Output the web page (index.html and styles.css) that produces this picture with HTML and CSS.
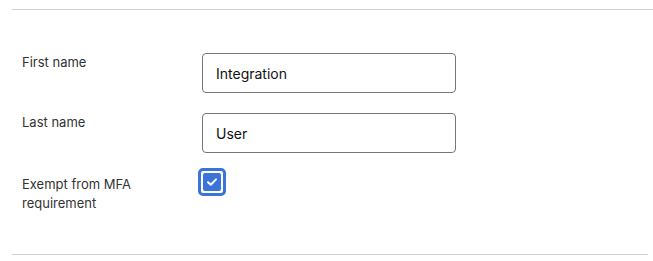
FILE: index.html
```html
<!DOCTYPE html>
<html>
<head>
<meta charset="utf-8">
<link rel="stylesheet" href="styles.css">
</head>
<body>
<div class="panel">
  <form class="form">
    <div class="row">
      <label class="label" for="fn">First name</label>
      <input class="field" id="fn" type="text" value="Integration">
    </div>
    <div class="row">
      <label class="label" for="ln">Last name</label>
      <input class="field" id="ln" type="text" value="User">
    </div>
    <div class="row row-check">
      <label class="label label-check" for="mfa">Exempt from MFA<br>requirement</label>
      <span class="check" id="mfa">
        <svg viewBox="0 0 18 18" width="18" height="18"><path d="M5 9.2 L7.8 11.8 L13 6.4" fill="none" stroke="#fff" stroke-width="2" stroke-linecap="round" stroke-linejoin="round"/></svg>
      </span>
    </div>
  </form>
</div>
</body>
</html>
```
FILE: styles.css
```css
html, body {
  margin: 0;
  padding: 0;
  background: #fff;
}
body {
  padding-top: 9px;
  font-family: Inter, "Noto Sans", sans-serif;
}
.panel {
  margin-left: 12px;
  border-top: 1px solid #cfcfcf;
}
.form {
  margin: 0 5px 0 0;
  padding: 43px 0 0 10px;
  height: 201px;
  border-bottom: 1px solid #cfcfcf;
  display: flex;
  flex-direction: column;
  gap: 20px;
}
.row {
  display: grid;
  grid-template-columns: 180px 254px;
  align-items: start;
}
.label {
  font-size: 13px;
  line-height: 18px;
  color: #333;
}
.field {
  box-sizing: border-box;
  width: 254px;
  height: 40px;
  border: 1px solid #767676;
  border-radius: 4px;
  padding: 0 13px;
  font-family: Inter, "Noto Sans", sans-serif;
  font-size: 14px;
  color: #111;
  background: #fff;
  outline: none;
}
.row-check {
  margin-top: -2px;
}
.label-check {
  padding-top: 4px;
  line-height: 19px;
}
.check {
  margin-left: -4px;
  margin-top: -3px;
  box-sizing: border-box;
  width: 28px;
  height: 28px;
  border: 3px solid #3b73d8;
  border-radius: 5px;
  padding: 2px;
  display: flex;
}
.check svg {
  background: #3b73d8;
  border-radius: 2px;
}
```
